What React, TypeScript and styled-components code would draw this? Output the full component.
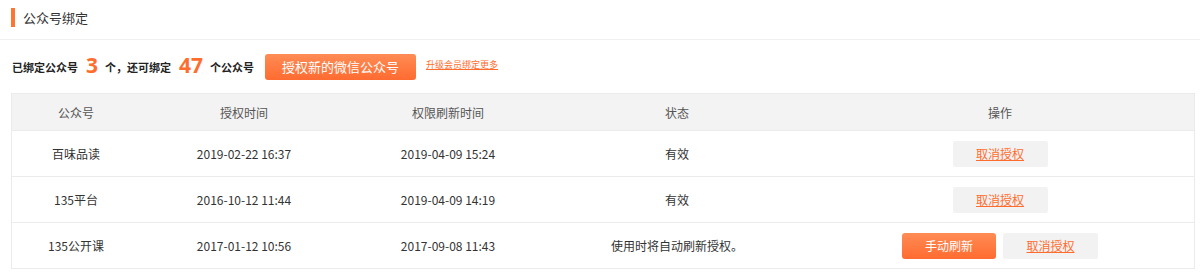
import React from 'react';
import styled, { createGlobalStyle } from 'styled-components';

const colors = {
  orange: '#ff6d2e',
  text: '#333',
  muted: '#555',
  border: '#ebebeb',
  headBg: '#f3f3f3',
};

const GlobalStyle = createGlobalStyle`
  body {
    margin: 0;
    background: #fff;
    font-family: "Microsoft YaHei", "Noto Sans CJK SC", "Noto Sans", sans-serif;
    color: ${colors.text};
  }
`;

interface Account {
  name: string;
  authTime: string;
  refreshTime: string;
  status: string;
  manual?: boolean;
}

const accounts: Account[] = [
  { name: '百味品读', authTime: '2019-02-22 16:37', refreshTime: '2019-04-09 15:24', status: '有效' },
  { name: '135平台', authTime: '2016-10-12 11:44', refreshTime: '2019-04-09 14:19', status: '有效' },
  {
    name: '135公开课',
    authTime: '2017-01-12 10:56',
    refreshTime: '2017-09-08 11:43',
    status: '使用时将自动刷新授权。',
    manual: true,
  },
];

const App = () => {
  return (
    <Page>
      <GlobalStyle />
      <TitleBar>
        <Mark />
        <h2>公众号绑定</h2>
      </TitleBar>
      <Stats>
        <span>已绑定公众号</span>
        <Count>3</Count>
        <span>个，还可绑定</span>
        <Count>47</Count>
        <span>个公众号</span>
        <PrimaryButton wide>授权新的微信公众号</PrimaryButton>
        <UpgradeLink href="#">升级会员绑定更多</UpgradeLink>
      </Stats>
      <Table>
        <HeadRow>
          <Cell>公众号</Cell>
          <Cell>授权时间</Cell>
          <Cell>权限刷新时间</Cell>
          <Cell>状态</Cell>
          <ActionCell>操作</ActionCell>
        </HeadRow>
        {accounts.map(a => (
          <Row key={a.name}>
            <Cell>{a.name}</Cell>
            <Cell>{a.authTime}</Cell>
            <Cell>{a.refreshTime}</Cell>
            <Cell>{a.status}</Cell>
            <ActionCell>
              {a.manual && <PrimaryButton>手动刷新</PrimaryButton>}
              <GrayButton>取消授权</GrayButton>
            </ActionCell>
          </Row>
        ))}
      </Table>
    </Page>
  );
};

const Page = styled.div`
  width: 1200px;
  height: 275px;
  overflow: hidden;
`;

const TitleBar = styled.div`
  height: 40px;
  box-sizing: border-box;
  display: flex;
  align-items: center;
  padding-left: 11px;
  border-bottom: 1px solid #f0f0f0;

  h2 {
    margin: -5px 0 0 8px;
    font-size: 13px;
    font-weight: normal;
    color: #333;
  }
`;

const Mark = styled.div`
  width: 4px;
  height: 19px;
  background: #ff7433;
  margin-top: -5px;
`;

const Stats = styled.div`
  height: 53px;
  display: flex;
  align-items: center;
  padding: 0 0 0 12px;
  font-size: 11px;
  font-weight: bold;
  color: #222;

  > span {
    white-space: nowrap;
  }
`;

const Count = styled.b`
  color: ${colors.orange};
  font-size: 21px;
  font-weight: bold;
  margin: -4px 7px 0 8px;
  font-family: "Open Sans", "Noto Sans", sans-serif;
`;

interface ButtonProps {
  wide?: boolean;
}

const PrimaryButton = styled.button<ButtonProps>`
  width: ${p => (p.wide ? '151px' : '94px')};
  height: 26px;
  margin-left: ${p => (p.wide ? '11px' : '0')};
  border: none;
  border-radius: 3px;
  background: linear-gradient(#ff8c55, #ff6b30);
  color: #fff;
  font-family: inherit;
  font-size: ${p => (p.wide ? '13px' : '12px')};
  font-weight: normal;
  padding: 0;
  cursor: pointer;
`;

const GrayButton = styled.button`
  width: 95px;
  height: 26px;
  border: none;
  border-radius: 2px;
  background: #f2f2f2;
  color: ${colors.orange};
  text-decoration: underline;
  font-family: inherit;
  font-size: 12px;
  padding: 0;
  cursor: pointer;
`;

const UpgradeLink = styled.a`
  margin-left: 10px;
  margin-top: -4px;
  font-size: 9px;
  font-weight: normal;
  color: ${colors.orange};
  text-decoration: underline;
`;

const Table = styled.div`
  margin: 0 0 0 11px;
  width: 1182px;
  border: 1px solid ${colors.border};
  border-bottom: none;
  font-size: 12px;
`;

const Row = styled.div`
  display: grid;
  grid-template-columns: 128px 208px 200px 258px 1fr;
  height: 45px;
  align-items: center;
  border-bottom: 1px solid ${colors.border};
  color: ${colors.text};
`;

const HeadRow = styled(Row)`
  height: 36px;
  background: ${colors.headBg};
  color: ${colors.muted};
`;

const Cell = styled.div`
  text-align: center;
  white-space: nowrap;
`;

const ActionCell = styled.div`
  display: flex;
  justify-content: center;
  gap: 7px;
`;

export default App;
